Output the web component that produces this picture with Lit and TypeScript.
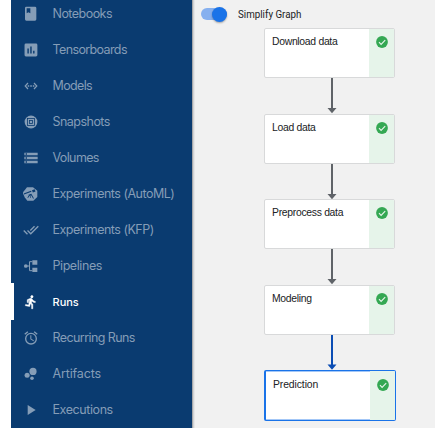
import { LitElement, html, svg, css } from "lit";
import { customElement } from "lit/decorators.js";
import { classMap } from "lit/directives/class-map.js";

const BG = "#0a3b70";

const icons = {
  book: svg`<path fill-rule="evenodd" d="M5 1h13a2 2 0 0 1 2 2v17a2 2 0 0 1-2 2H5a2 2 0 0 1-2-2V3a2 2 0 0 1 2-2zM5.5 3.5v7.5l2.7-1.7 2.8 1.7V3.5z"/>`,
  chart: svg`<path d="M19 3H5a2 2 0 0 0-2 2v14a2 2 0 0 0 2 2h14a2 2 0 0 0 2-2V5a2 2 0 0 0-2-2zM9 17H7v-7h2v7zm4 0h-2V7h2v10zm4 0h-2v-4h2v4z" transform="translate(-.9 -.9) scale(1.07)"/>`,
  models: svg`<path d="M7.5 7.5 3.3 12l4.2 4.5M16.5 7.5l4.2 4.5-4.2 4.5" fill="none" stroke="currentColor" stroke-width="1.8"/><path d="M7 11h2.3v2H7zm3.9 0h2.3v2h-2.3zm3.8 0H17v2h-2.3z"/>`,
  snapshot: svg`<circle cx="12" cy="12" r="9.6"/><g fill="none" stroke=${BG} stroke-width="1.2"><rect x="6.75" y="6.75" width="10.5" height="10.5"/><rect x="9.75" y="9.75" width="4.5" height="4.5"/></g>`,
  storage: svg`<path d="M2 20h20v-4H2v4zm2-3h2v2H4v-2zM2 4v4h20V4H2zm4 3H4V5h2v2zm-4 7h20v-4H2v4zm2-3h2v2H4v-2z"/>`,
  automl: svg`<path d="M6 2h9l6.500 5v9.500L15.500 22H6.500L2.500 17-.6 10z"/><path fill=${BG} d="m1 11.300 11-4 .7 1.500-11 4zM13.500 6.300l4-1.500 1.300 3.400-4 1.500zM8 13l4.500-1.500 3.800 7-1 .5-3.400-5.500V18h-.9v-4.500L7.500 18l-.9-.5 2.200-4z"/>`,
  doneAll: svg`<path d="m18 7-1.41-1.41-6.34 6.34 1.41 1.41L18 7zm4.24-1.41L11.66 16.17 7.48 12l-1.41 1.41L11.66 19l12-12-1.42-1.41zM.41 13.41 6 19l1.41-1.41L1.83 12 .41 13.41z"/>`,
  pipeline: svg`<path d="M14 3.500h7.500V10H14zM14 14.500h7.500V21H14z"/><circle cx="4.200" cy="12" r="2.800"/><path d="M5 12h4.800M14 5.500H9.800v13.500H14" fill="none" stroke="currentColor" stroke-width="1.500"/>`,
  run: svg`<path stroke="currentColor" stroke-width=".7" d="M13.49 5.48c1.1 0 2-.9 2-2s-.9-2-2-2-2 .9-2 2 .9 2 2 2zm-3.6 13.9 1-4.4 2.1 2v6h2v-7.5l-2.1-2 .6-3c1.3 1.5 3.3 2.5 5.5 2.5v-2c-1.9 0-3.5-1-4.3-2.4l-1-1.6c-.4-.6-1-1-1.7-1-.3 0-.5.1-.8.1l-5.2 2.2v4.7h2v-3.4l1.8-.7-1.6 8.1-4.9-1-.4 2 7 1.4z" transform="translate(.8 .8) scale(.93)"/>`,
  alarm: svg`<path d="m22 5.72-4.6-3.86-1.29 1.53 4.6 3.86L22 5.72zM7.88 3.39 6.6 1.86 2 5.71l1.29 1.53 4.59-3.85zM12.5 8H11v6l4.75 2.85.75-1.23-4-2.37V8zM12 4a9 9 0 1 0 0 18 9 9 0 0 0 0-18zm0 16a7 7 0 1 1 0-14 7 7 0 0 1 0 14z"/>`,
  bubbles: svg`<circle cx="6.2" cy="14" r="3.8"/><circle cx="13.5" cy="18.4" r="2.7"/><circle cx="15" cy="8.200" r="5.400"/>`,
  play: svg`<path d="M7 4.500v15L19 12z"/>`,
};

type IconName = keyof typeof icons;

const NAV: { icon: IconName; label: string; spacing: number; active?: boolean }[] = [
  { icon: "book", label: "Notebooks", spacing: -0.53 },
  { icon: "chart", label: "Tensorboards", spacing: -0.62 },
  { icon: "models", label: "Models", spacing: -0.65 },
  { icon: "snapshot", label: "Snapshots", spacing: -0.53 },
  { icon: "storage", label: "Volumes", spacing: -0.63 },
  { icon: "automl", label: "Experiments (AutoML)", spacing: -0.5 },
  { icon: "doneAll", label: "Experiments (KFP)", spacing: -0.5 },
  { icon: "pipeline", label: "Pipelines", spacing: -0.43 },
  { icon: "run", label: "Runs", spacing: 0, active: true },
  { icon: "alarm", label: "Recurring Runs", spacing: -0.58 },
  { icon: "bubbles", label: "Artifacts", spacing: -0.15 },
  { icon: "play", label: "Executions", spacing: -0.42 },
];

const STEPS = ["Download data", "Load data", "Preprocess data", "Modeling", "Prediction"];

@customElement("side-nav")
class SideNav extends LitElement {
  static styles = css`
    :host { display: block; box-sizing: border-box; width: 181px; height: 428px; overflow: hidden;
      background: #0a3b70; font: 400 12.5px/36px Inter, "Liberation Sans", sans-serif; }
    .list { margin-top: -4.5px; }
    .item { height: 36px; display: flex; align-items: center; color: #859db7; white-space: nowrap; }
    .mark { width: 3px; height: 37px; flex: none; }
    svg { width: 16px; height: 16px; margin: 0 14px 0 8.5px; flex: none; fill: currentColor; }
    .active { color: #fff; font-weight: 500; font-size: 11px; }
    .active .mark { background: #fff; }
  `;
  render() {
    return html`<div class="list">${NAV.map(
      (n) => html`<div class=${classMap({ item: true, active: !!n.active })}>
        <span class="mark"></span><svg viewBox="0 0 24 24">${icons[n.icon]}</svg>
        <span style="letter-spacing:${n.spacing}px">${n.label}</span>
      </div>`
    )}</div>`;
  }
}

@customElement("run-graph")
class RunGraph extends LitElement {
  static styles = css`
    :host { display: block; padding-left: 72px; margin-top: 7px;
      font: 10.4px/14px "Liberation Sans", Arial, sans-serif; letter-spacing: -0.3px; color: #202124; }
    .node { box-sizing: border-box; width: 131px; height: 50px; border: 1px solid #d8d9da; border-radius: 2px;
      background: #fff; display: flex; overflow: hidden; }
    .name { flex: 1; padding: 6px 0 0 7px; }
    .status { width: 25px; background: #e6f4ea; display: flex; justify-content: center; padding-top: 7px; }
    .check { width: 12px; height: 12px; }
    .arrow { display: block; width: 10px; height: 35.5px; margin-left: 62.5px; color: #5f6368; }
    .last { color: #0b4db4; height: 35px; }
    .selected { width: 132px; height: 51px; border: 2px solid #1a73e8; border-width: 1px 1px 1px 2px;
      box-shadow: inset 0 1px #a3c7f7, inset 0 -1px #a3c7f7; }
    .selected .name { padding: 7px 0 0 7px; letter-spacing: -0.1px; }
    .selected .status { padding-top: 8px; }
  `;
  render() {
    const end = STEPS.length - 1;
    return STEPS.map(
      (s, i) => html`${i
          ? html`<svg class=${classMap({ arrow: true, last: i === end })} viewBox="0 0 10 35.5" preserveAspectRatio="none" fill="currentColor">
              <path d="M4 0h2v30h3.5L5 35.2.5 30H4z" />
            </svg>`
          : ""}
        <div class=${classMap({ node: true, selected: i === end })}>
          <div class="name">${s}</div>
          <div class="status"><svg class="check" viewBox="0 0 12 12">
            <circle cx="6" cy="6" r="5.9" fill="#34a853" />
            <path d="M3 6.2 5.1 8.3 9.2 4.1" fill="none" stroke="#e6f4ea" stroke-width="1.2" />
          </svg></div>
        </div>`
    );
  }
}

@customElement("app-root")
class AppRoot extends LitElement {
  static styles = css`
    :host { display: flex; box-sizing: border-box; width: 435px; height: 428px; padding-left: 11px; overflow: hidden; background: #fff; }
    .main { flex: 1; background: #f1f1f1; box-shadow: inset 1px 0 #a6a8ab, inset 2px 0 #d2d3d4, inset 3px 0 #e6e6e7; }
    .bar { height: 14px; padding: 7px 0 0 9px; display: flex; align-items: center;
      font: 11.5px/14px Roboto, "Liberation Sans", sans-serif; color: #202124; }
    .caption { display: inline-block; transform: scaleX(0.85); transform-origin: left; }
    .toggle { width: 26px; height: 12px; border-radius: 6px; background: #86b0ef; display: flex; align-items: center; justify-content: flex-end; margin-right: 11px; }
    .thumb { width: 15px; height: 15px; flex: none; border-radius: 50%; background: #1a73e8; box-shadow: 0 1px 2px #0005; }
  `;
  render() {
    return html`<side-nav></side-nav>
      <div class="main">
        <div class="bar"><span class="toggle"><span class="thumb"></span></span><span class="caption">Simplify Graph</span></div>
        <run-graph></run-graph>
      </div>`;
  }
}
